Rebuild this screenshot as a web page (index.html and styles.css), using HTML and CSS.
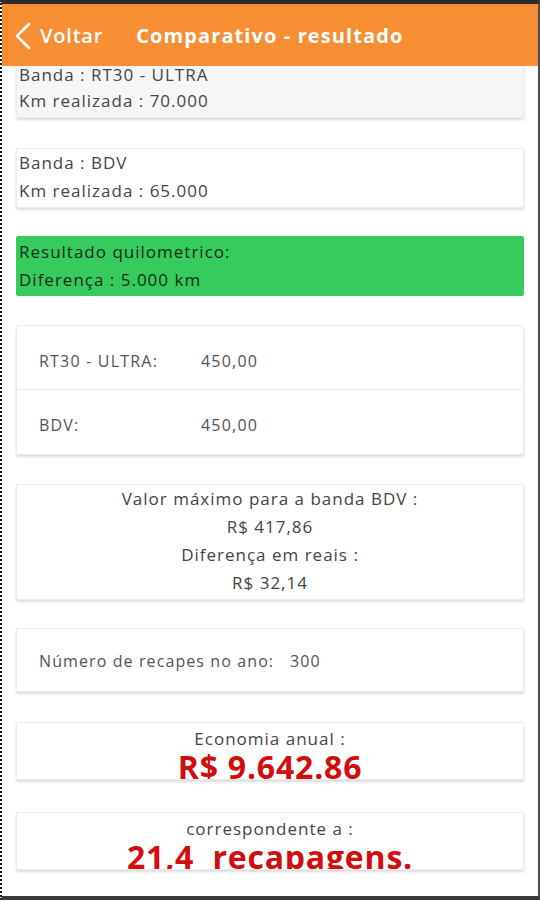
FILE: index.html
```html
<!DOCTYPE html>
<html lang="pt">
<head>
<meta charset="utf-8">
<title>Comparativo - resultado</title>
<link rel="stylesheet" href="styles.css">
</head>
<body>
<div class="frame">
  <header class="topbar">
    <a class="back" href="#">
      <svg class="chev" width="18" height="28" viewBox="0 0 18 28"><polyline points="15,2 3,14 15,26" fill="none" stroke="#fff" stroke-width="2.6" stroke-linecap="round" stroke-linejoin="round"/></svg>
      <span class="back-label">Voltar</span>
    </a>
    <h1 class="title">Comparativo - resultado</h1>
  </header>
  <main class="viewport">
    <div class="list">
      <section class="card card-first">
        <p>Banda : RT30 - ULTRA</p>
        <p>Km realizada : 70.000</p>
      </section>
      <section class="card card-info">
        <p>Banda : BDV</p>
        <p>Km realizada : 65.000</p>
      </section>
      <section class="card card-green">
        <p>Resultado quilometrico:</p>
        <p>Diferença : 5.000 km</p>
      </section>
      <section class="card card-prices">
        <div class="price-row"><span class="price-label">RT30 - ULTRA:</span><span class="price-value">450,00</span></div>
        <div class="price-row"><span class="price-label">BDV:</span><span class="price-value">450,00</span></div>
      </section>
      <section class="card card-center">
        <p>Valor máximo para a banda BDV :</p>
        <p>R$ 417,86</p>
        <p>Diferença em reais :</p>
        <p>R$ 32,14</p>
      </section>
      <section class="card card-count">
        <p>Número de recapes no ano:&nbsp;&nbsp; 300</p>
      </section>
      <section class="card card-big card-eco">
        <p class="big-label">Economia anual :</p>
        <p class="big-value">R$ 9.642.86</p>
      </section>
      <section class="card card-big card-corr">
        <p class="big-label">correspondente a :</p>
        <p class="big-value">21,4&nbsp; recapagens.</p>
      </section>
    </div>
  </main>
</div>
</body>
</html>
```
FILE: styles.css
```css
* { box-sizing: border-box; }
html, body { margin: 0; padding: 0; background: #fff; }
body { font-family: "Open Sans", "DejaVu Sans", sans-serif; color: #444; }
p { margin: 0; }

.frame {
  width: 540px;
  height: 900px;
  border-top: 4px solid #2b2b2b;
  border-left: 2px dotted #1e1e1e;
  border-right: 2px solid #4a4a4a;
  border-bottom: 4px solid #3a3a3a;
  display: flex;
  flex-direction: column;
  overflow: hidden;
  background: #fff;
}

.topbar {
  height: 62px;
  flex: none;
  background: #f68e34;
  display: flex;
  align-items: center;
  padding-left: 12px;
  position: relative;
  z-index: 2;
}
.back {
  display: flex;
  align-items: center;
  gap: 8px;
  color: #fff;
  text-decoration: none;
}
.chev { display: block; margin-top: 1px; }
.back-label { font-size: 20px; font-weight: 600; letter-spacing: 0.8px; }
.title {
  margin: 0 0 0 33px;
  font-size: 20px;
  font-weight: 700;
  letter-spacing: 1.1px;
  color: #fff;
}

.viewport { flex: 1; overflow: hidden; }
.list {
  margin-top: -4px;
  padding: 0 14px;
  display: flex;
  flex-direction: column;
}

.card {
  flex: none;
  background: #fff;
  border: 1px solid #ececec;
  border-radius: 2px;
  box-shadow: 0 2px 3px rgba(0, 0, 0, 0.14);
  font-size: 17px;
  line-height: 28px;
  letter-spacing: 1px;
  color: #454545;
  overflow: hidden;
}

.card-first {
  height: 56px;
  background: #f6f6f6;
  border-top: none;
  padding: 0 2px;
  line-height: 26px;
}
.card-info { margin-top: 30px; height: 60px; padding: 0 2px; }
.card-green {
  margin-top: 28px;
  height: 60px;
  background: #36cb5c;
  border-color: #36cb5c;
  color: #1b2d1d;
  padding: 1px 2px 0;
  box-shadow: none;
}

.card-prices { margin-top: 29px; height: 130px; font-size: 16px; letter-spacing: 1.2px; color: #555; }
.price-row {
  height: 63px;
  padding-top: 6px;
  display: flex;
  align-items: center;
  padding-left: 22px;
}
.price-row + .price-row { height: 65px; border-top: 1px solid #ececec; margin: 0 1px; padding-left: 21px; }
.price-label { width: 162px; }

.card-center { margin-top: 29px; height: 116px; text-align: center; padding: 0; }
.card-count { margin-top: 28px; height: 64px; padding: 18px 0 0 22px; font-size: 16px; letter-spacing: 1.1px; color: #555; }

.card-big { text-align: center; height: 58px; }
.card-eco { margin-top: 30px; }
.card-corr { margin-top: 32px; }
.big-label { line-height: 28px; padding-top: 2px; }
.big-value {
  font-size: 32px;
  font-weight: 700;
  letter-spacing: 0.8px;
  color: #d10d0d;
  line-height: 28px;
}
```
